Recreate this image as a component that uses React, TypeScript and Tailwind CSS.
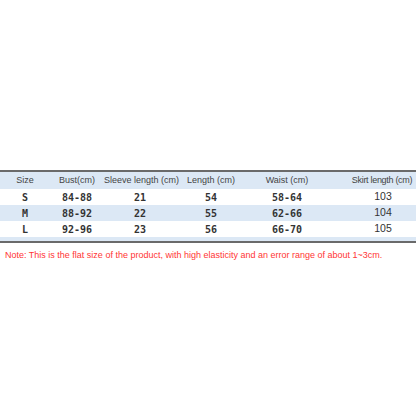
import React from 'react';

const rows = [
  { size: 'S', bust: '84-88', sleeve: '21', length: '54', waist: '58-64', skirt: '103' },
  { size: 'M', bust: '88-92', sleeve: '22', length: '55', waist: '62-66', skirt: '104' },
  { size: 'L', bust: '92-96', sleeve: '23', length: '56', waist: '66-70', skirt: '105' },
];

const grid = 'grid grid-cols-[50px_54px_72px_70px_82px_1fr] items-center';
const mono = "font-['DejaVu_Sans_Mono',monospace] font-bold text-[10px] text-[#333]";

export default function App() {
  return (
    <div className="w-[416px] h-[416px] bg-white pt-[170px] font-['Liberation_Sans',Arial,sans-serif]">
      <div className="border-t-2 border-b-2 border-[#6a6a6a]">
        <div className={`${grid} h-[17px] bg-[#dce8f5] text-[9px] text-[#444] text-center`}>
          <div>Size</div>
          <div>Bust(cm)</div>
          <div className="whitespace-nowrap">Sleeve length (cm)</div>
          <div>Length (cm)</div>
          <div>Waist (cm)</div>
          <div className="pl-[20px] whitespace-nowrap tracking-[-0.3px]">Skirt length (cm)</div>
        </div>
        {rows.map((r, i) => (
          <div
            key={r.size}
            className={`${grid} h-[16px] text-center ${i === 1 ? 'bg-[#dce8f5]' : 'bg-white'}`}
          >
            <div className={mono}>{r.size}</div>
            <div className={mono}>{r.bust}</div>
            <div className={mono}>{r.sleeve}</div>
            <div className={mono}>{r.length}</div>
            <div className={mono}>{r.waist}</div>
            <div className="pl-[22px] text-[10.5px] text-[#333]">{r.skirt}</div>
          </div>
        ))}
        <div className="h-[4px] bg-[#dce8f5]" />
      </div>
      <p className="mt-[6px] pl-[5px] text-[9px] text-[#ff3535] whitespace-nowrap">
        Note: This is the flat size of the product, with high elasticity and an error range of about 1~3cm.
      </p>
    </div>
  );
}
